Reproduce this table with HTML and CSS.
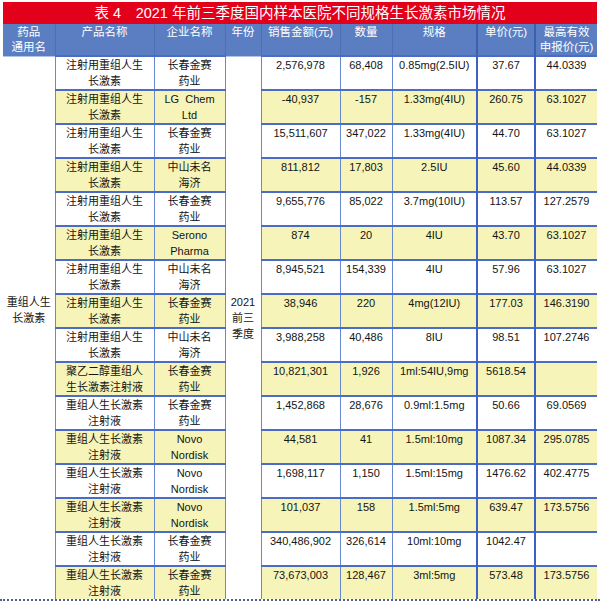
FILE: index.html
```html
<!DOCTYPE html>
<html lang="zh">
<head>
<meta charset="utf-8">
<title>表4 生长激素市场情况</title>
<link rel="stylesheet" href="styles.css">
</head>
<body>
<div class="page">
  <div class="title">表 4　2021 年前三季度国内样本医院不同规格生长激素市场情况</div>
  <table class="grid">
    <colgroup>
      <col class="c-gen"><col class="c-prod"><col class="c-comp"><col class="c-year"><col class="c-sales"><col class="c-qty"><col class="c-spec"><col class="c-price"><col class="c-max">
    </colgroup>
    <thead>
      <tr>
        <th>药品<br>通用名</th>
        <th>产品名称</th>
        <th>企业名称</th>
        <th>年份</th>
        <th>销售金额(元)</th>
        <th>数量</th>
        <th>规格</th>
        <th class="dark">单价(元)</th>
        <th class="dark">最高有效<br>申报价(元)</th>
      </tr>
    </thead>
    <tbody>
      <tr>
        <td class="gen" rowspan="16"><div class="span-text">重组人生<br>长激素</div></td>
        <td>注射用重组人生<br>长激素</td><td>长春金赛<br>药业</td>
        <td class="year" rowspan="16"><div class="span-text">2021<br>前三<br>季度</div></td>
        <td>2,576,978</td><td>68,408</td><td>0.85mg(2.5IU)</td><td class="dk">37.67</td><td class="dk">44.0339</td>
      </tr>
      <tr class="hl">
        <td>注射用重组人生<br>长激素</td><td>LG&nbsp; Chem<br>Ltd</td>
        <td>-40,937</td><td>-157</td><td>1.33mg(4IU)</td><td class="dk">260.75</td><td class="dk">63.1027</td>
      </tr>
      <tr>
        <td>注射用重组人生<br>长激素</td><td>长春金赛<br>药业</td>
        <td>15,511,607</td><td>347,022</td><td>1.33mg(4IU)</td><td class="dk">44.70</td><td class="dk">63.1027</td>
      </tr>
      <tr class="hl">
        <td>注射用重组人生<br>长激素</td><td>中山未名<br>海济</td>
        <td>811,812</td><td>17,803</td><td>2.5IU</td><td class="dk">45.60</td><td class="dk">44.0339</td>
      </tr>
      <tr>
        <td>注射用重组人生<br>长激素</td><td>长春金赛<br>药业</td>
        <td>9,655,776</td><td>85,022</td><td>3.7mg(10IU)</td><td class="dk">113.57</td><td class="dk">127.2579</td>
      </tr>
      <tr class="hl">
        <td>注射用重组人生<br>长激素</td><td>Serono<br>Pharma</td>
        <td>874</td><td>20</td><td>4IU</td><td class="dk">43.70</td><td class="dk">63.1027</td>
      </tr>
      <tr>
        <td>注射用重组人生<br>长激素</td><td>中山未名<br>海济</td>
        <td>8,945,521</td><td>154,339</td><td>4IU</td><td class="dk">57.96</td><td class="dk">63.1027</td>
      </tr>
      <tr class="hl">
        <td>注射用重组人生<br>长激素</td><td>长春金赛<br>药业</td>
        <td>38,946</td><td>220</td><td>4mg(12IU)</td><td class="dk">177.03</td><td class="dk">146.3190</td>
      </tr>
      <tr>
        <td>注射用重组人生<br>长激素</td><td>中山未名<br>海济</td>
        <td>3,988,258</td><td>40,486</td><td>8IU</td><td class="dk">98.51</td><td class="dk">107.2746</td>
      </tr>
      <tr class="hl">
        <td>聚乙二醇重组人<br>生长激素注射液</td><td>长春金赛<br>药业</td>
        <td>10,821,301</td><td>1,926</td><td>1ml:54IU,9mg</td><td class="dk">5618.54</td><td class="dk"></td>
      </tr>
      <tr>
        <td>重组人生长激素<br>注射液</td><td>长春金赛<br>药业</td>
        <td>1,452,868</td><td>28,676</td><td>0.9ml:1.5mg</td><td class="dk">50.66</td><td class="dk">69.0569</td>
      </tr>
      <tr class="hl">
        <td>重组人生长激素<br>注射液</td><td>Novo<br>Nordisk</td>
        <td>44,581</td><td>41</td><td>1.5ml:10mg</td><td class="dk">1087.34</td><td class="dk">295.0785</td>
      </tr>
      <tr>
        <td>重组人生长激素<br>注射液</td><td>Novo<br>Nordisk</td>
        <td>1,698,117</td><td>1,150</td><td>1.5ml:15mg</td><td class="dk">1476.62</td><td class="dk">402.4775</td>
      </tr>
      <tr class="hl">
        <td>重组人生长激素<br>注射液</td><td>Novo<br>Nordisk</td>
        <td>101,037</td><td>158</td><td>1.5ml:5mg</td><td class="dk">639.47</td><td class="dk">173.5756</td>
      </tr>
      <tr>
        <td>重组人生长激素<br>注射液</td><td>长春金赛<br>药业</td>
        <td>340,486,902</td><td>326,614</td><td>10ml:10mg</td><td class="dk">1042.47</td><td class="dk"></td>
      </tr>
      <tr class="hl">
        <td>重组人生长激素<br>注射液</td><td>长春金赛<br>药业</td>
        <td>73,673,003</td><td>128,467</td><td>3ml:5mg</td><td class="dk">573.48</td><td class="dk">173.5756</td>
      </tr>
    </tbody>
  </table>
</div>
<div class="rule"></div>
</body>
</html>
```

FILE: styles.css
```css
html, body {
  margin: 0;
  padding: 0;
  background: #ffffff;
}

body {
  font-family: "Liberation Sans", "Noto Sans CJK SC", sans-serif;
  font-size: 11px;
  color: #141414;
  width: 600px;
}

.page {
  padding: 2px 3px 0 3px;
}

.title {
  height: 22px;
  background: #e2001b;
  color: #ffffff;
  font-size: 14.5px;
  line-height: 22px;
  text-align: center;
}

.grid {
  border-collapse: collapse;
  table-layout: fixed;
  width: 594px;
}

.c-gen { width: 52px; }
.c-prod { width: 99px; }
.c-comp { width: 71px; }
.c-year { width: 36px; }
.c-sales { width: 79px; }
.c-qty { width: 52px; }
.c-spec { width: 85px; }
.c-price { width: 58px; }
.c-max { width: 62px; }

.grid th {
  background: #5b7ec2;
  color: #ffffff;
  font-weight: normal;
  font-size: 11.5px;
  line-height: 15px;
  height: 30px;
  padding: 1px 0 0 0;
  vertical-align: top;
  text-align: center;
  white-space: nowrap;
  border-left: 1px solid #4d6fb8;
  border-bottom: 1px solid #b4c4e6;
}

.grid th:first-child {
  border-left: none;
}

.grid th.dark {
  border-left: 2px solid #3e5fb0;
}

.grid td {
  height: 31.9px;
  padding: 0;
  vertical-align: top;
  text-align: center;
  line-height: 16px;
  white-space: nowrap;
  border-top: 2px solid #4a6cc8;
  border-left: 1px solid #6888d0;
}

.grid td.dk {
  border-left: 2px solid #3d61c4;
}

.grid tr.hl td {
  background: #f6f4b8;
}

.grid tr.hl td.gen,
.grid tr.hl td.year {
  background: #ffffff;
}

.grid td.gen {
  border-left: none;
  border-top: none;
  background: #ffffff;
}

.grid td.year {
  border-top: none;
  background: #ffffff;
}

.span-text {
  padding-top: 237px;
}

.rule {
  margin-top: 0;
  border-top: 2px dotted #4e5f94;
  width: 600px;
}
```
